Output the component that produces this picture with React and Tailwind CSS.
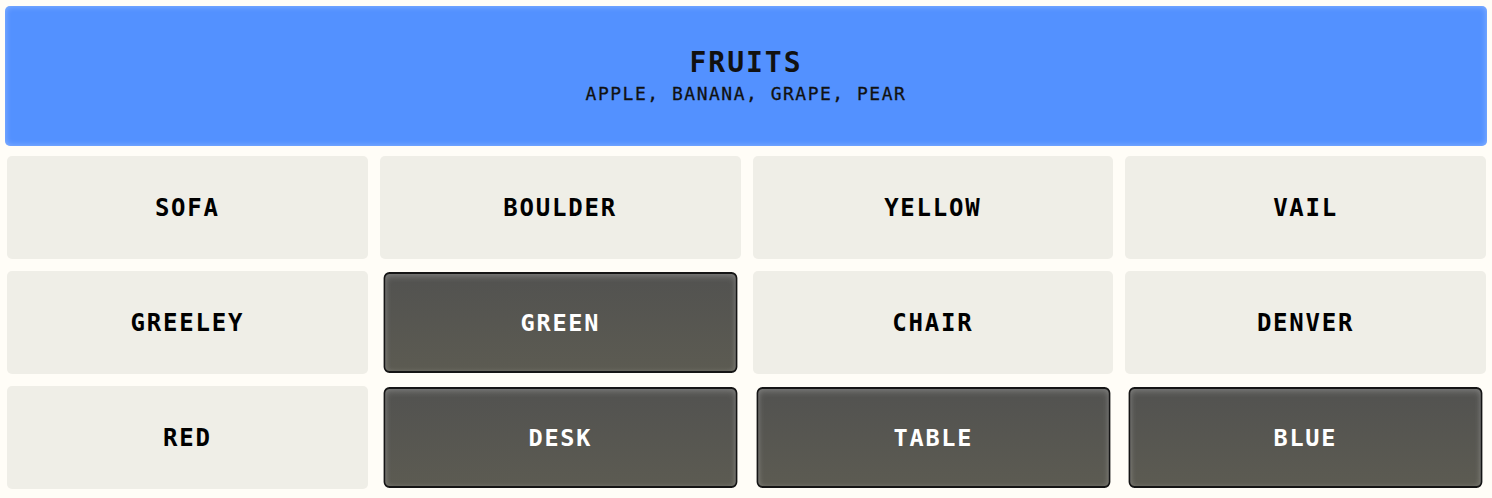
const solved = {
  title: 'FRUITS',
  members: ['APPLE', 'BANANA', 'GRAPE', 'PEAR'],
};

const tiles = [
  { word: 'SOFA' },
  { word: 'BOULDER' },
  { word: 'YELLOW' },
  { word: 'VAIL' },
  { word: 'GREELEY' },
  { word: 'GREEN', selected: true },
  { word: 'CHAIR' },
  { word: 'DENVER' },
  { word: 'RED' },
  { word: 'DESK', selected: true },
  { word: 'TABLE', selected: true },
  { word: 'BLUE', selected: true },
];

function Tile({ word, selected }) {
  if (selected) {
    return (
      <button
        type="button"
        className="h-[103px] scale-[0.98] rounded-[6px] border-2 border-[#151515] bg-gradient-to-b from-[#525250] to-[#5c5b52] shadow-[inset_0_3px_6px_rgba(255,255,255,0.18),inset_0_0_5px_rgba(255,255,255,0.12)] flex items-center justify-center text-[24px] font-bold tracking-[1.8px] text-white"
      >
        {word}
      </button>
    );
  }
  return (
    <button
      type="button"
      className="h-[103px] rounded-[5px] bg-[#efeee7] flex items-center justify-center text-[24px] font-bold tracking-[1.8px] text-[#000]"
    >
      {word}
    </button>
  );
}

export default function App() {
  return (
    <div
      className="min-h-[498px] bg-[#fffdf7] px-[5px] pt-[6px]"
      style={{ fontFamily: '"DejaVu Sans Mono", "Liberation Mono", monospace' }}
    >
      {/* Solved group */}
      <div className="h-[140px] rounded-[5px] bg-[#5391ff] shadow-[inset_0_0_6px_rgba(255,255,255,0.35)] flex flex-col items-center justify-center text-[#111]">
        <div className="text-[28px] leading-[34px] font-bold tracking-[2px]">{solved.title}</div>
        <div className="mt-[2px] text-[18px] leading-[24px] tracking-[1.5px] [-webkit-text-stroke:0.3px_#111]">{solved.members.join(', ')}</div>
      </div>

      {/* Remaining words */}
      <div className="mt-[10px] ml-[2px] mr-[1px] grid grid-cols-4 gap-[12px]">
        {tiles.map((t) => (
          <Tile key={t.word} {...t} />
        ))}
      </div>
    </div>
  );
}
